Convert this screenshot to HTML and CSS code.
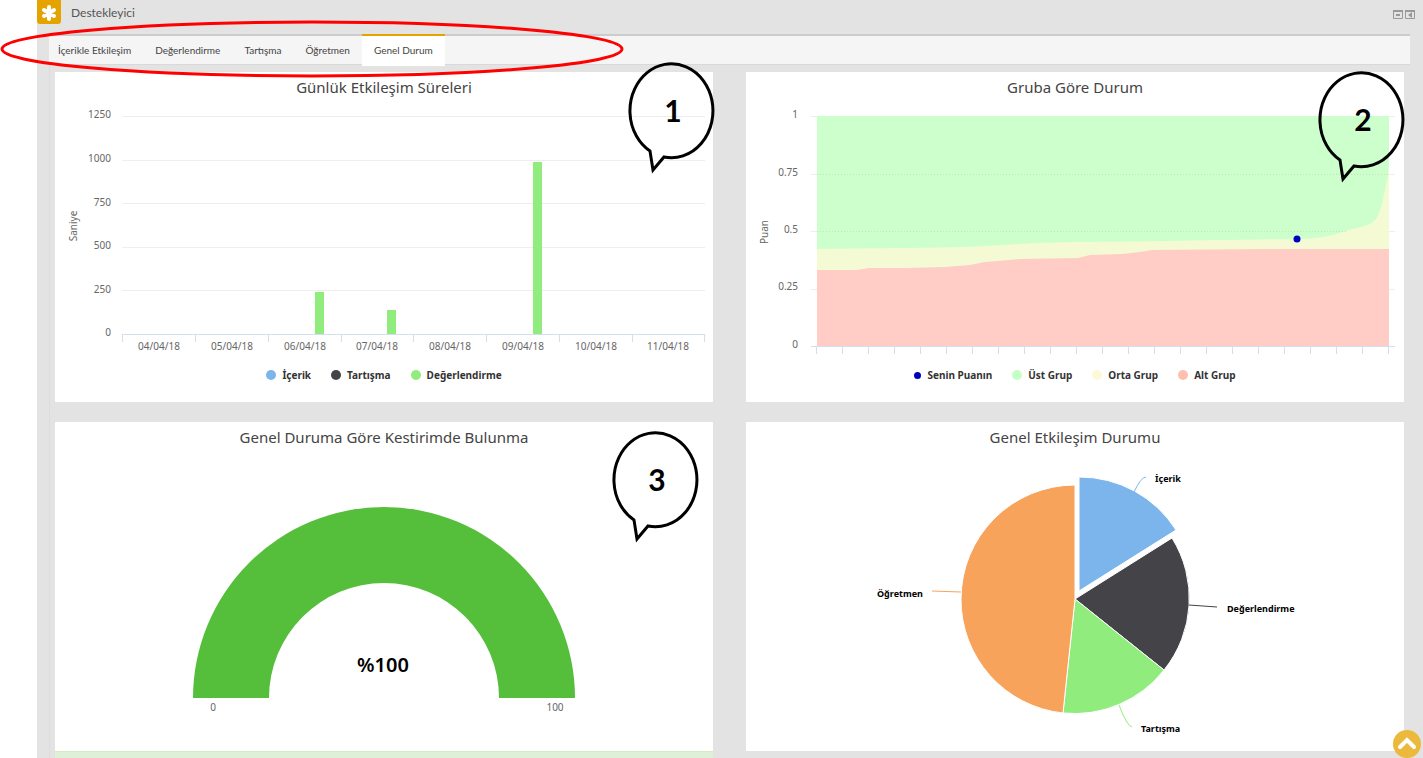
FILE: index.html
```html
<!DOCTYPE html>
<html lang="tr">
<head>
<meta charset="utf-8">
<title>Destekleyici</title>
<link rel="stylesheet" href="styles.css">
</head>
<body>
<main class="panel">
  <header class="panel-head">
    <span class="logo"><svg viewBox="0 0 24 24" width="24" height="24" aria-hidden="true"><path d="M12 7v12M7 10l10 6M17 10l-10 6"/></svg></span>
    <h1>Destekleyici</h1>
    <div class="tools">
      <button aria-label="Küçült"><svg viewBox="0 0 10 10" width="10" height="10"><path d="M.5.5h9v8h-9z"/><path d="M0 1h10" class="thick"/><path d="M3 5h4" class="thick"/></svg></button>
      <button aria-label="Yana al"><svg viewBox="0 0 10 10" width="10" height="10"><path d="M.5.5h9v8h-9z"/><path d="M0 1h10" class="thick"/><path d="M7 2v6L3 5z" class="solid"/></svg></button>
    </div>
  </header>
  <div class="body">
    <nav class="tabs">
      <a href="#icerik">İçerikle Etkileşim</a>
      <a href="#degerlendirme">Değerlendirme</a>
      <a href="#tartisma">Tartışma</a>
      <a href="#ogretmen">Öğretmen</a>
      <a href="#genel" class="active">Genel Durum</a>
    </nav>
    <div class="columns">
      <div class="column">
        <section class="card">
          <h2>Günlük Etkileşim Süreleri</h2>
          <svg class="chart" viewBox="0 0 658 258">
            <path class="grid" d="M67 14.500H650M67 58.500H650M67 101.500H650M67 145.500H650M67 188.500H650"/>
            <path class="axis" d="M67 232.500H650M67.500 232v8M140.500 232v8M213.500 232v8M286.500 232v8M358.500 232v8M431.500 232v8M504.500 232v8M577.500 232v8M649.500 232v8"/>
            <g class="bars"><path d="M260 190h9v42h-9zM332 208h9v24h-9zM478 60h9v172h-9z"/></g>
            <g class="label end">
              <text x="56" y="16">1250</text><text x="56" y="60">1000</text><text x="56" y="104">750</text><text x="56" y="147">500</text><text x="56" y="191">250</text><text x="56" y="234">0</text>
            </g>
            <g class="label mid">
              <text x="104" y="248">04/04/18</text><text x="177" y="248">05/04/18</text><text x="250" y="248">06/04/18</text><text x="322" y="248">07/04/18</text><text x="395" y="248">08/04/18</text><text x="468" y="248">09/04/18</text><text x="541" y="248">10/04/18</text><text x="613" y="248">11/04/18</text>
              <text transform="translate(22 124) rotate(-90)">Saniye</text>
            </g>
          </svg>
          <ul class="legend">
            <li><i class="dot blue"></i>İçerik</li>
            <li><i class="dot dark"></i>Tartışma</li>
            <li><i class="dot green"></i>Değerlendirme</li>
          </ul>
          <svg class="callout first" viewBox="0 0 90 114" width="90" height="114"><path d="M25 91A41.500 47 0 1 1 39 97L28 110Z"/><text x="48" y="62">1</text></svg>
        </section>
        <section class="card">
          <h2>Genel Duruma Göre Kestirimde Bulunma</h2>
          <svg class="chart" viewBox="0 0 658 299">
            <path class="gauge" d="M138 246A191 191 0 0 1 520 246H444A115 115 0 0 0 214 246Z"/>
            <text class="value" x="328" y="220">%100</text>
            <g class="label mid"><text x="158" y="259">0</text><text x="500" y="259">100</text></g>
          </svg>
          <svg class="callout third" viewBox="0 0 90 114" width="90" height="114"><path d="M25 91A41.500 47 0 1 1 39 97L28 110Z"/><text x="48" y="62">3</text></svg>
        </section>
        <div class="notice"></div>
      </div>
      <div class="column">
        <section class="card">
          <h2>Gruba Göre Durum</h2>
          <svg class="chart" viewBox="0 0 658 258">
            <path class="grid" d="M65 14.500H649M65 72.500H649M65 129.500H649M65 187.500H649"/>
            <path class="top-group" d="M71 14H643V244H71Z"/>
            <path class="mid-group" d="M71 147C130 146 190 146 214 145C250 144 290 140 330 140C400 140 450 138 554 137C585 136 592 131 606 127C622 124 630 122 634 108C639 90 642 75 643 62V244H71Z"/>
            <path class="low-group" d="M71 168H111L123 166H160L199 165L224 163L239 160L274 157L332 156L344 153L376 152L394 150L406 148L540 147H643V244H71Z"/>
            <path class="guide" d="M71 72.500H642M71 129.500H600"/>
            <path class="axis" d="M65 244.500H649M70.500 244v8M96.500 244v8M122.500 244v8M148.500 244v8M174.500 244v8M200.500 244v8M226.500 244v8M252.500 244v8M278.500 244v8M304.500 244v8M330.500 244v8M356.500 244v8M382.500 244v8M408.500 244v8M434.500 244v8M460.500 244v8M486.500 244v8M512.500 244v8M538.500 244v8M564.500 244v8M590.500 244v8M616.500 244v8M642.500 244v8"/>
            <circle class="point" cx="551" cy="137" r="3.500"/>
            <g class="label end">
              <text x="52" y="16">1</text><text x="52" y="74">0.75</text><text x="52" y="131">0.5</text><text x="52" y="188">0.25</text><text x="52" y="246">0</text>
            </g>
            <g class="label mid"><text transform="translate(22 130) rotate(-90)">Puan</text></g>
          </svg>
          <ul class="legend">
            <li><i class="dot navy"></i>Senin Puanın</li>
            <li><i class="dot mint"></i>Üst Grup</li>
            <li><i class="dot cream"></i>Orta Grup</li>
            <li><i class="dot pink"></i>Alt Grup</li>
          </ul>
          <svg class="callout second" viewBox="0 0 90 114" width="90" height="114"><path d="M25 91A41.500 47 0 1 1 39 97L28 110Z"/><text x="48" y="62">2</text></svg>
        </section>
        <section class="card">
          <h2>Genel Etkileşim Durumu</h2>
          <svg class="chart pie" viewBox="0 0 658 299">
            <path fill="#7cb5ec" d="M333 139V25A114 114 0 0 1 430 78Z"/>
            <path fill="#434348" d="M329 147L426 86A114 114 0 0 1 418 218Z"/>
            <path fill="#90ed7d" d="M329 147L418 218A114 114 0 0 1 317 261Z"/>
            <path fill="#f7a35c" d="M329 147L317 261A114 114 0 0 1 215 147A114 114 0 0 1 329 33Z"/>
            <g class="link">
              <path stroke="#7cb5ec" d="M388 40Q395 25 400 25"/>
              <path stroke="#434348" d="M443 153L471 155"/>
              <path stroke="#90ed7d" d="M373 253Q381 274 386 275"/>
              <path stroke="#f7a35c" d="M215 140L186 139"/>
            </g>
            <g class="slice-label"><text x="409" y="30">İçerik</text><text x="481" y="160">Değerlendirme</text><text x="395" y="280">Tartışma</text><text x="131" y="145">Öğretmen</text></g>
          </svg>
        </section>
      </div>
    </div>
  </div>
</main>
<svg class="marker" viewBox="0 0 624 60" width="624" height="60" aria-hidden="true"><ellipse cx="312" cy="29" rx="310" ry="27"/></svg>
<a class="to-top" href="#" aria-label="Yukarı"><svg viewBox="0 0 28 28" width="28" height="28"><path d="M7 17l7-7 7 7"/></svg></a>
</body>
</html>
```
FILE: styles.css
```css
* { box-sizing: border-box; }
body {
  margin: 0;
  height: 100vh;
  overflow: hidden;
  position: relative;
  background: #fff;
  color: #555;
  font-family: "Noto Sans", "Open Sans", sans-serif;
  font-size: 11px;
}
.panel {
  min-height: 100vh;
  margin-left: 37px;
  display: flex;
  flex-direction: column;
  background: #e3e3e3;
}
.panel-head { display: flex; height: 34px; }
.logo {
  width: 24px;
  height: 24px;
  border-radius: 0 0 3px 3px;
  background: #e5a300;
}
.logo path { stroke: #fff; stroke-width: 4; stroke-linecap: round; }
h1 {
  margin: 0 0 0 10px;
  font: 12px/26px Lato, sans-serif;
  color: #555;
}
.tools {
  margin-left: auto;
  padding: 10px 8px 0 0;
  display: flex;
  gap: 2px;
  align-items: flex-start;
}
.tools button {
  display: flex;
  padding: 0;
  border: 0;
  background: none;
}
.tools path { fill: none; stroke: #999; }
.tools .thick { stroke-width: 2; }
.tools .solid { fill: #999; stroke: none; }
.body {
  flex: 1;
  display: flex;
  flex-direction: column;
  margin: 0 13px 0 12px;
}
.tabs {
  display: flex;
  height: 32px;
  border-top: 2px solid #ccc;
  background: linear-gradient(#f5f5f5 28px, #d9d9d9 28px, #d9d9d9 29px, #e3e3e3 29px);
}
.tabs a {
  padding: 0 12px;
  margin-top: -2px;
  border-top: 2px solid transparent;
  font: 10px/28px Lato, sans-serif;
  color: #444;
  text-decoration: none;
}
.tabs a:first-child { padding-left: 9px; }
.tabs a.active { background: #fff; border-top-color: #e5a300; }
.columns {
  flex: 1;
  display: flex;
  gap: 33px;
  padding: 6px 6px 0 5px;
  border-left: 1px solid #dcdcdc;
}
.column { flex: 1; display: flex; flex-direction: column; }
.card { position: relative; background: #fff; }
.card + .card { margin-top: 20px; }
h2 {
  margin: 0;
  font-size: 15px;
  font-weight: 400;
  line-height: 30px;
  text-align: center;
  color: #444;
}
.chart { display: block; width: 100%; }
.grid { stroke: #eee; }
.axis { stroke: #d3deee; }
.guide { stroke: #b9e8b9; stroke-dasharray: 1 2; }
.bars { fill: #90ed7d; }
.top-group { fill: #ccffcc; }
.mid-group { fill: #f4fad3; }
.low-group { fill: #ffccc6; }
.point { fill: #0000bf; }
.gauge { fill: #55bf3b; }
.label { font-size: 10px; fill: #666; }
.end { text-anchor: end; }
.mid { text-anchor: middle; }
.value { font-size: 20px; font-weight: 600; text-anchor: middle; fill: #000; }
.pie > path { stroke: #fff; }
.link { fill: none; }
.slice-label { font: 700 9px "Noto Sans", sans-serif; fill: #000; }
.legend {
  display: flex;
  justify-content: center;
  gap: 20px;
  height: 42px;
  margin: 0;
  padding: 0;
  list-style: none;
  font-size: 10px;
  font-weight: 700;
  line-height: 30px;
  color: #333;
}
.legend li { display: flex; align-items: center; height: 30px; }
.dot { width: 10px; height: 10px; margin-right: 6px; border-radius: 50%; }
.blue { background: #7cb5ec; }
.dark { background: #434348; }
.green { background: #90ed7d; }
.navy { width: 7px; height: 7px; background: #0000bf; }
.mint { background: #c6ffc6; }
.cream { background: #fff8d8; }
.pink { background: #ffbfae; }
.notice {
  flex: 1;
  min-height: 7px;
  border-top: 1px solid #d6e9c6;
  background: #dff0d8;
}
.callout { position: absolute; z-index: 1; }
.callout path { fill: none; stroke: #000; stroke-width: 3; }
.callout text { font: 700 30px Lato, sans-serif; text-anchor: middle; fill: #000; }
.first { top: -12px; right: -2px; }
.second { top: -3px; right: -1px; }
.third { top: 7px; right: 14px; }
.marker { position: absolute; left: 0; top: 20px; pointer-events: none; }
.marker ellipse { fill: none; stroke: #f00; stroke-width: 3; }
.to-top {
  position: fixed;
  right: 2px;
  bottom: 0;
  width: 28px;
  height: 28px;
  border-radius: 50%;
  background: #ebb93c;
}
.to-top path { fill: none; stroke: #fff; stroke-width: 4; stroke-linecap: round; }
```
